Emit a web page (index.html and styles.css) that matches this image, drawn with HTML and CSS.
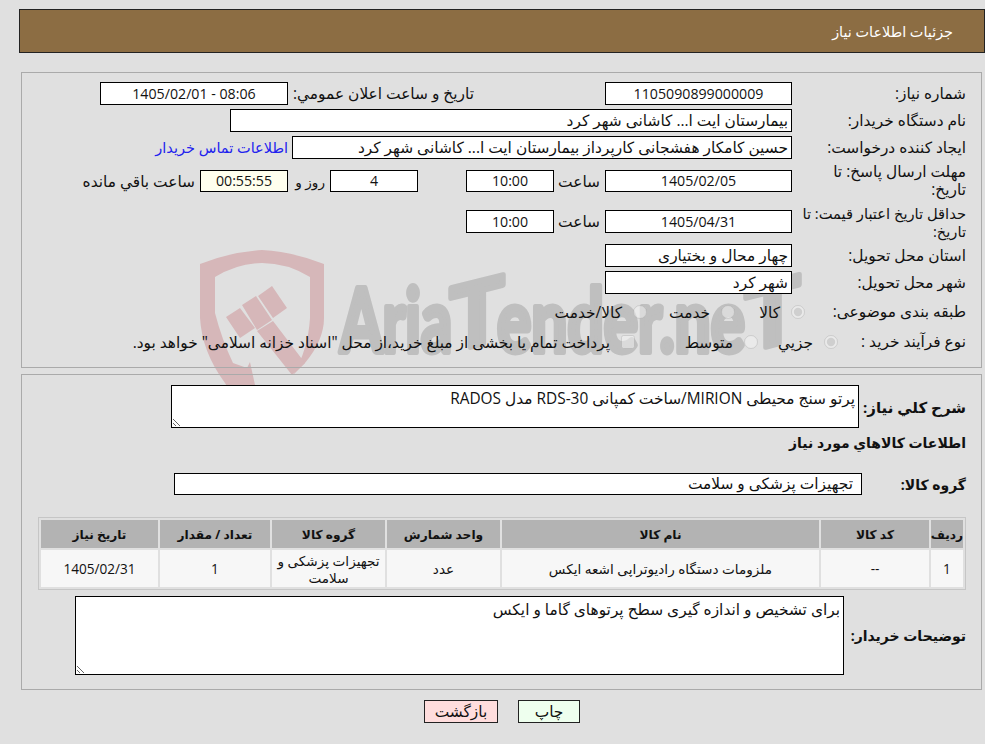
FILE: index.html
```
<!DOCTYPE html>
<html lang="fa" dir="rtl">
<head>
<meta charset="utf-8">
<title>جزئیات اطلاعات نیاز</title>
<link rel="stylesheet" href="styles.css">
</head>
<body>
<svg class="watermark" width="985" height="400" viewBox="0 0 985 400" aria-hidden="true">
  <path class="wm-shield" fill-rule="evenodd" d="M262 250 Q230 252 200 264 L200 318 Q202 352 225 383 L232 395 L260 395 L255 385 L250 362 L247 368 L233 363 Q222 340 215 313 L215 277 Q238 263 262 263 Q287 263 310 277 L310 318 Q308 350 293 375 L305 363 Q324 340 324 318 L324 264 Q294 252 262 250 Z"/>
  <path class="wm-shield" d="M226 317 L240 308 L255 328 L240 338 Z M242 305 L256 296 L272 320 L257 330 Z M258 296 L272 286 L287 308 L273 318 Z M257 331 L273 321 L305 363 L292 375 Z"/>
  <g class="wm-text">
    <text class="wm-word" x="340" y="352" textLength="112" lengthAdjust="spacingAndGlyphs">Aria</text>
    <text class="wm-word wm-skew" x="450" y="352" textLength="54" lengthAdjust="spacingAndGlyphs">T</text>
    <text class="wm-word" x="497" y="352" textLength="248" lengthAdjust="spacingAndGlyphs">ender.ne</text>
    <text class="wm-word wm-skew" x="745" y="352" textLength="55" lengthAdjust="spacingAndGlyphs">T</text>
  </g>
</svg>

<header class="titlebar"><span class="titlebar-text">جزئیات اطلاعات نیاز</span></header>

<section class="panel panel-top">
  <div class="row">
    <div class="label">شماره نیاز:</div>
    <div class="field w187 center num">1105090899000009</div>
    <div class="label-inline m-131">تاریخ و ساعت اعلان عمومي:</div>
    <div class="field w188 center m-5 num ltr">1405/02/01 - 08:06</div>
  </div>
  <div class="row">
    <div class="label">نام دستگاه خریدار:</div>
    <div class="field w562">بیمارستان ایت ا... کاشانی شهر کرد</div>
  </div>
  <div class="row">
    <div class="label">ایجاد کننده درخواست:</div>
    <div class="field w500">حسین کامکار هفشجانی کارپرداز بیمارستان ایت ا... کاشانی شهر کرد</div>
    <a class="link m-4" href="#">اطلاعات تماس خریدار</a>
  </div>
  <div class="row row-tall">
    <div class="label">مهلت ارسال پاسخ: تا<br>تاریخ:</div>
    <div class="field w187 center h22 num">1405/02/05</div>
    <div class="label-inline m-5 w41">ساعت</div>
    <div class="field w88 center h22 m-5 num">10:00</div>
    <div class="field w88 center h22 m-48 num">4</div>
    <div class="label-inline m-5 w32 tight">روز و</div>
    <div class="field w88 center h22 timer m-5 num">00:55:55</div>
    <div class="label-inline m-5">ساعت باقي مانده</div>
  </div>
  <div class="row row-tall2">
    <div class="label label-fit">حداقل تاریخ اعتبار قیمت: تا<br>تاریخ:</div>
    <div class="field w187 center num">1405/04/31</div>
    <div class="label-inline m-5 w41">ساعت</div>
    <div class="field w88 center m-5 num">10:00</div>
  </div>
  <div class="row">
    <div class="label">استان محل تحویل:</div>
    <div class="field w187">چهار محال و بختیاری</div>
  </div>
  <div class="row">
    <div class="label">شهر محل تحویل:</div>
    <div class="field w187">شهر کرد</div>
  </div>
  <div class="row row-radio row-cat">
    <div class="label">طبقه بندی موضوعی:</div>
    <label class="opt opt-a"><input type="radio" name="cat" checked disabled><span>کالا</span></label>
    <label class="opt opt-b"><input type="radio" name="cat" disabled><span>خدمت</span></label>
    <label class="opt"><input type="radio" name="cat" disabled><span>کالا/خدمت</span></label>
  </div>
  <div class="row row-radio">
    <div class="label">نوع فرآیند خرید :</div>
    <label class="opt opt-d"><input type="radio" name="proc" checked disabled><span>جزیي</span></label>
    <label class="opt opt-e"><input type="radio" name="proc" disabled><span>متوسط</span></label>
    <label class="opt"><input type="checkbox" disabled><span>پرداخت تمام یا بخشی از مبلغ خرید،از محل "اسناد خزانه اسلامی" خواهد بود.</span></label>
  </div>
</section>

<section class="panel panel-bottom">
  <div class="row row-desc">
    <div class="label-bold label-large w107">شرح کلي نیاز:</div>
    <textarea class="area area-desc" readonly>پرتو سنج محیطی MIRION/ساخت کمپانی RDS-30 مدل RADOS</textarea>
  </div>
  <h2 class="section-title">اطلاعات کالاهاي مورد نیاز</h2>
  <div class="row row-group">
    <div class="label-bold w104">گروه کالا:</div>
    <div class="field w688 pad-group">تجهیزات پزشکی و سلامت</div>
  </div>
  <table class="items">
    <colgroup>
      <col class="c1"><col class="c2"><col class="c3"><col class="c4"><col class="c5"><col class="c6"><col class="c7">
    </colgroup>
    <thead>
      <tr><th>ردیف</th><th>کد کالا</th><th>نام کالا</th><th>واحد شمارش</th><th>گروه کالا</th><th>تعداد / مقدار</th><th>تاریخ نیاز</th></tr>
    </thead>
    <tbody>
      <tr><td>1</td><td>--</td><td>ملزومات دستگاه رادیوتراپی اشعه ایکس</td><td>عدد</td><td>تجهیزات پزشکی و سلامت</td><td>1</td><td>1405/02/31</td></tr>
    </tbody>
  </table>
  <div class="row row-notes">
    <div class="label-bold w122">توضیحات خریدار:</div>
    <textarea class="area area-notes" readonly>برای تشخیص و اندازه گیری سطح پرتوهای گاما و ایکس</textarea>
  </div>
</section>

<div class="actions">
  <button class="btn btn-print" type="button">چاپ</button>
  <button class="btn btn-back" type="button">بازگشت</button>
</div>
</body>
</html>
```
FILE: styles.css
```
html { background: #e0e0e0; }
body {
  margin: 0;
  width: 985px;
  height: 744px;
  overflow: hidden;
  position: relative;
  font-family: "Open Sans", "DejaVu Sans", sans-serif;
  font-size: 15.4px;
  color: #111;
}
.watermark { position: absolute; left: 0; top: 0; z-index: -1; }
.wm-shield { fill: #d6b7b9; }
.wm-word {
  fill: #bfbfbf;
  stroke: #bfbfbf;
  stroke-width: 6px;
  stroke-linejoin: round;
  font-family: "Lato", sans-serif;
  font-weight: 700;
  font-size: 88px;
  direction: ltr;
}
.wm-skew { transform-box: fill-box; transform-origin: 0 100%; transform: skewY(-14deg); }

.titlebar {
  margin: 9px 0 0 0;
  width: 966px;
  height: 44px;
  box-sizing: border-box;
  border: 1px solid #222;
  background: #8c6d43;
  color: #fff;
  display: flex;
  align-items: center;
  padding-right: 31px;
  font-size: 14.4px;
}

.panel {
  width: 961px;
  box-sizing: border-box;
  margin-right: 3px;
  border: 1px solid #aaa;
  padding-right: 15px;
}
.panel-top { margin-top: 19px; height: 296px; padding-top: 9px; }
.panel-bottom { margin-top: 6px; height: 316px; padding-top: 10px; }

.row { display: flex; align-items: center; height: 23px; margin-bottom: 4px; }
.row-tall { height: 36px; margin-bottom: 4px; }
.row-tall2 { height: 37px; margin-bottom: 4px; }
.row-radio { height: 20px; margin-bottom: 10px; }
.row-cat { margin-top: 8px; }

.label { width: 174px; flex: none; line-height: 18px; white-space: nowrap; }
.label-fit { font-size: 14.7px; }
.label-inline { flex: none; white-space: nowrap; }
.label-bold { flex: none; font-weight: 700; font-size: 14px; }
.label-large { font-size: 15px; }
.tight { font-size: 13.6px; }

.field {
  flex: none;
  height: 23px;
  box-sizing: border-box;
  border: 1px solid #000;
  background: #fff;
  line-height: 21px;
  padding: 0 3px;
  white-space: nowrap;
  overflow: hidden;
}
.center { text-align: center; }
.num { font-size: 14.2px; }
.ltr { direction: ltr; }
.h22 { height: 22px; line-height: 20px; }
.timer { background: #ffffee; }
.w32 { width: 32px; }
.w41 { width: 41px; }
.w88 { width: 88px; }
.w187 { width: 187px; }
.w188 { width: 188px; }
.w500 { width: 500px; }
.w562 { width: 562px; }
.w688 { width: 688px; }
.w104 { width: 104px; }
.w107 { width: 107px; }
.w122 { width: 122px; }
.pad-group { padding-right: 8px; }

.m-4 { margin-right: 4px; }
.m-5 { margin-right: 5px; }
.m-48 { margin-right: 48px; }
.m-131 { margin-right: 131px; }

.link { color: #2222ee; text-decoration: none; white-space: nowrap; font-size: 14.5px; }

.opt { display: flex; align-items: center; flex: none; white-space: nowrap; }
.opt input { margin: 0; width: 14px; height: 14px; flex: none; opacity: .75; }
.opt span { margin-right: 11px; }
.opt-a { width: 70px; margin-right: -13px; }
.opt-b { width: 88px; }
.opt-d { width: 80px; margin-right: -46px; }
.opt-e { width: 123px; }

.area {
  flex: none;
  box-sizing: border-box;
  border: 1px solid #000;
  border-radius: 0;
  background: #fff;
  font: inherit;
  color: #111;
  padding: 2px 3px;
  margin: 0;
  outline: none;
  direction: rtl;
  overflow: hidden;
}
.area-desc { width: 688px; height: 43px; }
.area-notes { width: 769px; height: 79px; }
.row-desc { height: 43px; margin-bottom: 5px; }
.section-title {
  margin: 0;
  height: 20px;
  line-height: 20px;
  font-size: 14px;
  font-weight: 700;
}
.row-group { height: 22px; margin-top: 20px; margin-bottom: 22px; }
.row-group .field { height: 22px; line-height: 20px; }

.items {
  width: 928px;
  table-layout: fixed;
  border-collapse: separate;
  border-spacing: 2px;
  border: 1px solid #c6c6c6;
  font-size: 13.6px;
}
.c1 { width: 32px; }
.c2 { width: 108px; }
.c3 { width: 317px; }
.c4 { width: 113px; }
.c5 { width: 113px; }
.c6 { width: 110px; }
.c7 { width: 117px; }
.items th { height: 28px; padding: 0; background: #b3b3b3; font-size: 12.2px; font-weight: 700; }
.items td { height: 37px; padding: 0 3px; background: #f7f7f7; text-align: center; line-height: 17px; }
.row-notes { height: 79px; margin-top: 6px; margin-bottom: 0; }

.actions { display: flex; gap: 20px; padding-right: 405px; margin-top: 10px; }
.btn {
  height: 23px;
  box-sizing: border-box;
  border: 1px solid #222;
  border-radius: 0;
  font: inherit;
  color: #111;
  padding: 0;
}
.btn-print { width: 62px; background: #eeffee; }
.btn-back { width: 74px; background: #ffdddd; }
```
